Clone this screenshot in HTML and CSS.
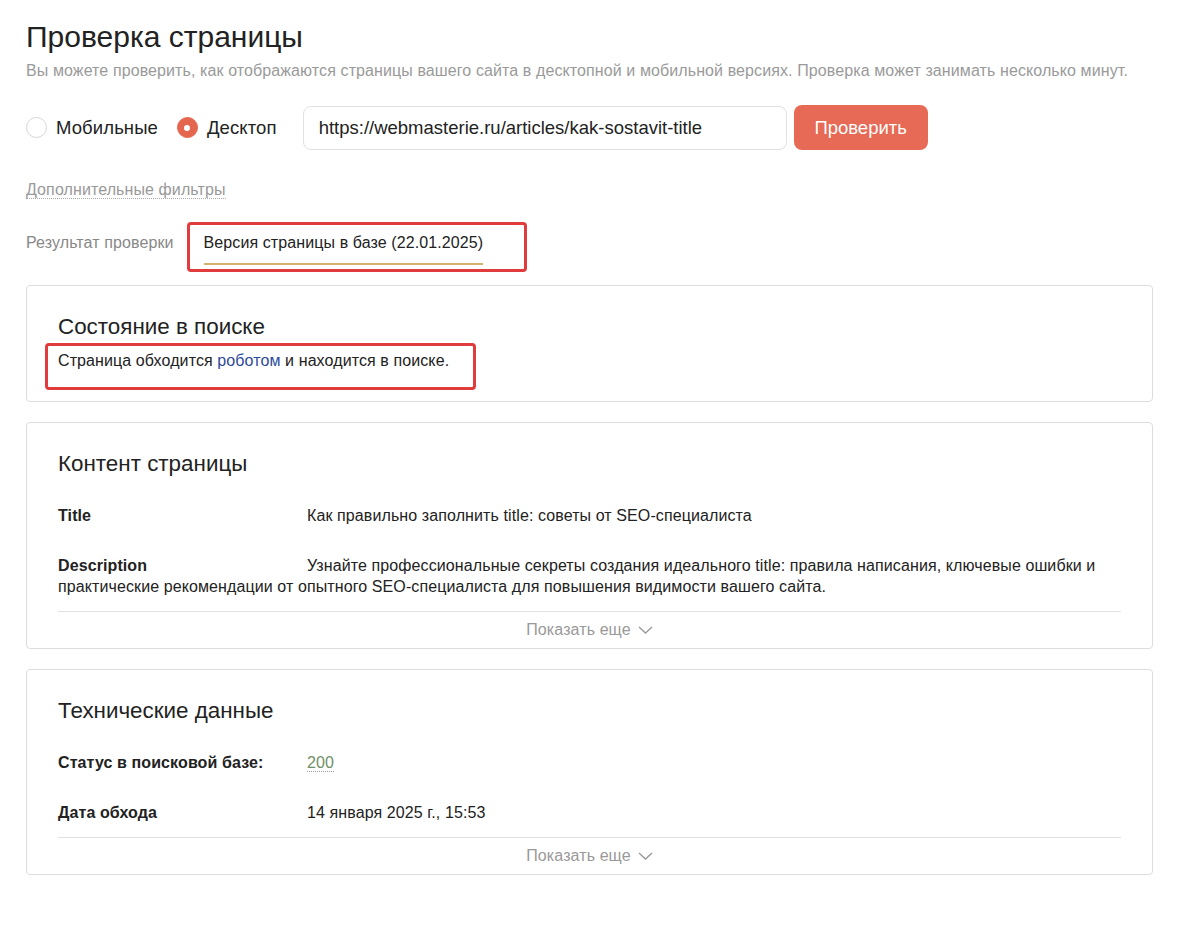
FILE: index.html
```html
<!DOCTYPE html>
<html lang="ru">
  <head>
    <meta charset="UTF-8" />
    <title>Проверка страницы</title>
    <link rel="stylesheet" href="styles.css">
  </head>
  <body>
    <div class="container">
      <h1>Проверка страницы</h1>
      <p class="subtitle">Вы можете проверить, как отображаются страницы вашего сайта в десктопной и мобильной версиях. Проверка может занимать несколько минут.</p>

      <div class="check-form">
        <label class="radio">
          <span class="radio-circle"></span>
          Мобильные
        </label>
        <label class="radio checked">
          <span class="radio-circle"></span>
          Десктоп
        </label>
        <div class="url-input">https://webmasterie.ru/articles/kak-sostavit-title</div>
        <button class="check-btn">Проверить</button>
      </div>

      <div class="filters">
        <span class="filters-link">Дополнительные фильтры</span>
      </div>

      <div class="tabs">
        <span class="tab">Результат проверки</span>
        <span class="tab active marked">Версия страницы в базе (22.01.2025)</span>
      </div>

      <div class="card">
        <h2>Состояние в поиске</h2>
        <p class="status-text marked">Страница обходится <span class="link">роботом</span> и находится в поиске.</p>
      </div>

      <div class="card">
        <h2>Контент страницы</h2>
        <div class="rows">
          <div class="row"><span class="row-label">Title</span>Как правильно заполнить title: советы от SEO-специалиста</div>
          <div class="row"><span class="row-label">Description</span>Узнайте профессиональные секреты создания идеального title: правила написания, ключевые ошибки и практические рекомендации от опытного SEO-специалиста для повышения видимости вашего сайта.</div>
        </div>
        <div class="show-more">
          Показать еще
          <svg width="15" height="8" viewBox="0 0 15 8"><path d="M1 1l6.5 6 6.5-6" fill="none" stroke="#999" stroke-width="1.4"/></svg>
        </div>
      </div>

      <div class="card">
        <h2>Технические данные</h2>
        <div class="rows">
          <div class="row"><span class="row-label">Статус в поисковой базе:</span><span class="code">200</span></div>
          <div class="row"><span class="row-label">Дата обхода</span>14 января 2025 г., 15:53</div>
        </div>
        <div class="show-more">
          Показать еще
          <svg width="15" height="8" viewBox="0 0 15 8"><path d="M1 1l6.5 6 6.5-6" fill="none" stroke="#999" stroke-width="1.4"/></svg>
        </div>
      </div>
    </div>
  </body>
</html>
```

FILE: styles.css
```css
* {
  box-sizing: border-box;
  margin: 0;
  padding: 0;
  font-family: "Liberation Sans", Arial, sans-serif;
}

body {
  background-color: #fff;
  color: #222;
}

.container {
  width: 1153px;
  padding: 20px 0 40px 26px;
}

h1 {
  font-size: 30px;
  line-height: 34px;
  font-weight: normal;
  color: #222;
}

.subtitle {
  margin-top: 7px;
  font-size: 16px;
  line-height: 20px;
  letter-spacing: 0.1px;
  color: #9a9a9a;
}

.check-form {
  margin-top: 24px;
  display: flex;
  align-items: center;
}

.radio {
  display: flex;
  align-items: center;
  gap: 9px;
  font-size: 18.5px;
  letter-spacing: 0.1px;
  color: #222;
  margin-right: 19px;
}

.radio:nth-child(2) {
  margin-right: 26px;
}

.radio-circle {
  width: 21px;
  height: 21px;
  border-radius: 50%;
  border: 1px solid #d6d6d6;
  background-color: #fff;
  display: flex;
  align-items: center;
  justify-content: center;
}

.radio.checked .radio-circle {
  background-color: #e5664f;
  border-color: #e5664f;
}

.radio.checked .radio-circle::after {
  content: "";
  width: 6px;
  height: 6px;
  border-radius: 50%;
  background-color: #fff;
}

.url-input {
  width: 484px;
  height: 44px;
  border: 1px solid #e2e2e2;
  border-radius: 8px;
  padding: 0 15px;
  font-size: 18.5px;
  line-height: 42px;
  color: #222;
}

.check-btn {
  margin-left: 7px;
  width: 134px;
  height: 45px;
  border: none;
  border-radius: 8px;
  background-color: #e66a55;
  color: #fff;
  font-size: 18.5px;
  cursor: pointer;
}

.filters {
  margin-top: 30px;
  font-size: 16px;
  line-height: 20px;
  letter-spacing: 0.1px;
}

.filters-link {
  color: #999;
  border-bottom: 1px dotted #aaa;
}

.tabs {
  margin-top: 34px;
  display: flex;
  gap: 30px;
  font-size: 16px;
  line-height: 18px;
  letter-spacing: 0.1px;
}

.tab {
  color: #888;
  padding-bottom: 11px;
}

.tab.active {
  color: #222;
  border-bottom: 2px solid #d4b26c;
}

.marked {
  position: relative;
}

.marked::after {
  content: "";
  position: absolute;
  border: 3px solid #e03b3d;
  border-radius: 4px;
}

.tab.marked::after {
  top: -12px;
  left: -17px;
  right: -44px;
  bottom: -9px;
}

.card {
  margin-top: 20px;
  border: 1px solid #ddd;
  border-radius: 4px;
  padding: 28px 31px 0;
}

.card + .card {
  margin-top: 20px;
}

.card h2 {
  font-size: 22.4px;
  line-height: 25px;
  font-weight: normal;
  color: #222;
}

.status-text {
  display: inline-block;
  margin-top: 11px;
  margin-bottom: 30px;
  font-size: 16px;
  line-height: 21px;
  letter-spacing: 0.1px;
}

.status-text::after {
  top: -7px;
  left: -13px;
  right: -27px;
  bottom: -19px;
}

.link {
  color: #2d4a9a;
}

.rows {
  padding-bottom: 14px;
  border-bottom: 1px solid #e2e2e2;
}

.row {
  margin-top: 29px;
  font-size: 16px;
  line-height: 21px;
  letter-spacing: 0.1px;
  color: #222;
}

.row-label {
  display: inline-block;
  width: 249px;
  font-weight: bold;
}

.code {
  color: #6f8f66;
  border-bottom: 1px dotted #999;
}

.show-more {
  height: 36px;
  display: flex;
  align-items: center;
  justify-content: center;
  gap: 7px;
  font-size: 16px;
  letter-spacing: 0.1px;
  color: #999;
}
```
